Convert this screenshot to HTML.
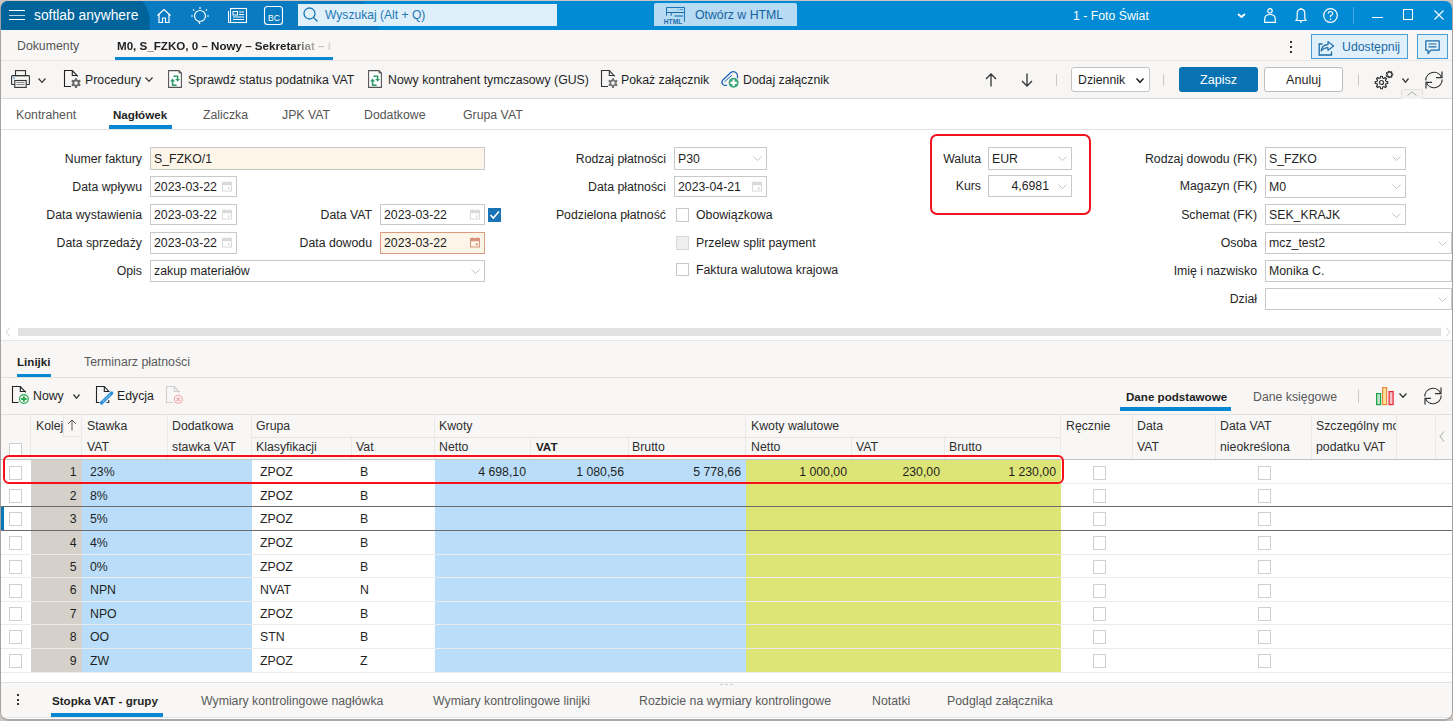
<!DOCTYPE html><html><head><meta charset="utf-8"><style>
*{box-sizing:border-box;margin:0;padding:0}
html,body{width:1453px;height:721px;overflow:hidden;background:#cdc5c1;font-family:"Liberation Sans",sans-serif;font-size:12.2px;color:#1f1f1f}
.a{position:absolute;white-space:nowrap;line-height:1}
#win{position:absolute;left:0;top:1px;width:1453px;height:720px;background:#f8f7f6;border-radius:8px 8px 9px 9px;overflow:hidden;border:1px solid #a2a2a2;border-top:none;border-bottom:2px solid #a8a8a8}
svg{position:absolute;overflow:visible}
.b{font-weight:bold;font-size:11.6px}
.g{color:#5c5c5c}
.inp{position:absolute;border:1px solid #c8c8c8;background:#fff}
.cb{position:absolute;width:13px;height:13px;border:1px solid #c6c6c6;background:#fff}
</style></head><body><div id="win"><div class="a" style="left:-1px;top:0px;width:1453px;height:29px;background:#008bd4"></div><div class="a" style="left:0;top:0;width:400px;height:29px;background:#0a7bc0;clip-path:polygon(0 0,362px 0,379px 29px,0 29px)"></div><svg style="left:0;top:0" width="160" height="29" viewBox="0 0 160 29"><path d="M0 0 H141 Q150.5 9 148.5 29 H0 Z" fill="#00649b"/></svg><div class="a" style="left:8px;top:9px;width:16px;height:1.3px;background:#fff"></div><div class="a" style="left:8px;top:13.6px;width:16px;height:1.3px;background:#c4d9e6"></div><div class="a" style="left:8px;top:18px;width:16px;height:1.3px;background:#fff"></div><div class="a " style="left:33px;top:8px;color:#fff;font-size:13.8px">softlab anywhere</div><svg style="left:155px;top:7px;" width="16" height="16" viewBox="0 0 16 16"><path d="M1.5 7.5 L8 1.5 L14.5 7.5 M3 6.5 V14.5 H6.5 V10 H9.5 V14.5 H13 V6.5" fill="none" stroke="#fff" stroke-width="1.2"/></svg><svg style="left:189px;top:5px;" width="20" height="20" viewBox="0 0 20 20"><circle cx="10" cy="10" r="5.5" fill="none" stroke="#fff" stroke-width="1.2"/><path d="M8.5 15.5 L10 18 M10 1v2 M3 3.5l1.2 1.2 M17 3.5l-1.2 1.2 M1 10h2 M17 10h2" stroke="#fff" stroke-width="1.2"/></svg><svg style="left:227px;top:7px;" width="19" height="15" viewBox="0 0 19 15"><rect x="2.5" y="0.5" width="16" height="14" fill="none" stroke="#fff" stroke-width="1.1"/><path d="M0.5 3 V14.5 H2.5" fill="none" stroke="#fff" stroke-width="1"/><rect x="5" y="3.5" width="4.5" height="3.5" fill="none" stroke="#fff" stroke-width="1"/><path d="M11 4h5 M11 6.5h5 M5 9h11 M5 11.5h11" stroke="#fff" stroke-width="1"/></svg><svg style="left:263px;top:5px;" width="19" height="19" viewBox="0 0 19 19"><rect x="0.5" y="0.5" width="18" height="18" rx="3" fill="none" stroke="#fff" stroke-width="1.1"/><text x="4" y="15" font-family="Liberation Sans" font-size="8.5" fill="#fff">BC</text></svg><div class="a" style="left:297px;top:3px;width:259px;height:22px;background:#e0f0fa"></div><svg style="left:302px;top:6px;" width="16" height="16" viewBox="0 0 16 16"><circle cx="6.5" cy="6.5" r="5.5" fill="none" stroke="#1779b9" stroke-width="1.3"/><path d="M10.5 10.5 L14.5 14.5" stroke="#1779b9" stroke-width="1.3"/></svg><div class="a " style="left:324px;top:8px;color:#1e78b6;font-size:12.1px">Wyszukaj (Alt + Q)</div><div class="a" style="left:653px;top:2px;width:143px;height:23px;background:#b6dbf3;border-radius:2px 2px 0 0"></div><svg style="left:661px;top:5px;" width="24" height="20" viewBox="0 0 24 20"><path d="M4.5 9.7 V1.5 H22.5 V15.8" fill="none" stroke="#1a73b4" stroke-width="1"/><path d="M4.5 6.5 H22.5 M9.2 6.5 V9.7" fill="none" stroke="#1a6aab" stroke-width="1"/><path d="M12.5 10 H21" stroke="#3d8cc6" stroke-width="1.3"/><path d="M15.3 3.6 H16.3 M17.6 3.6 H20.8" stroke="#3d8cc6" stroke-width="0.9"/><text x="1.8" y="18.3" font-family="Liberation Sans" font-weight="bold" font-size="6.6" fill="#1a6aab" textLength="18.5">HTML</text></svg><div class="a " style="left:694px;top:8px;color:#16629e;font-size:12.3px">Otwórz w HTML</div><div class="a " style="left:1072px;top:9px;color:#fff;font-size:12.3px">1 - Foto Świat</div><svg style="left:1236px;top:12px;" width="9" height="5" viewBox="0 0 9 5"><path d="M1 1 L4.5 4 L8 1" fill="none" stroke="#fff" stroke-width="1.8"/></svg><svg style="left:1263px;top:7px;" width="12" height="15" viewBox="0 0 12 15"><circle cx="6" cy="2.8" r="2.2" fill="none" stroke="#fff" stroke-width="1.2"/><path d="M0.7 14.4 V11 Q0.7 6.5 6 6.5 Q11.3 6.5 11.3 11 V14.4 Z" fill="none" stroke="#fff" stroke-width="1.2"/></svg><svg style="left:1294px;top:7px;" width="12" height="16" viewBox="0 0 12 16"><path d="M1 12.5 H11 L9.8 10.5 V5.5 Q9.8 1.2 6 1.2 Q2.2 1.2 2.2 5.5 V10.5 Z" fill="none" stroke="#fff" stroke-width="1.2"/><path d="M6 0 V1.2 M6 13 V15" stroke="#fff" stroke-width="1.3"/></svg><svg style="left:1322px;top:7px;" width="16" height="16" viewBox="0 0 16 16"><circle cx="7.5" cy="7.5" r="6.8" fill="none" stroke="#fff" stroke-width="1.2"/><path d="M5.3 5.6 Q5.3 3.5 7.5 3.5 Q9.7 3.5 9.7 5.5 Q9.7 6.8 7.5 7.8 V9.2" fill="none" stroke="#fff" stroke-width="1.2"/><circle cx="7.5" cy="11.2" r="0.8" fill="#fff"/></svg><div class="a" style="left:1352px;top:6px;width:1px;height:17px;background:#47a6e0"></div><div class="a" style="left:1371px;top:16px;width:11px;height:1.2px;background:#fff"></div><div class="a" style="left:1401.5px;top:8px;width:10.5px;height:10.5px;border:1.2px solid #fff"></div><svg style="left:1433px;top:9px;" width="10" height="10" viewBox="0 0 10 10"><path d="M0.5 0.5 L9.5 9.5 M9.5 0.5 L0.5 9.5" stroke="#fff" stroke-width="1.1"/></svg><div class="a" style="left:-1px;top:29px;width:1453px;height:30px;background:#f8f7f6"></div><div class="a" style="left:-1px;top:59px;width:1453px;height:1px;background:#e9e7e5"></div><div class="a g" style="left:16px;top:39px;font-size:12.3px;color:#555">Dokumenty</div><div class="a b" style="left:116px;top:39px;width:218px;overflow:hidden;font-size:11.6px;-webkit-mask-image:linear-gradient(90deg,#000 81%,rgba(0,0,0,0.55) 86%,rgba(0,0,0,0.3) 91%,rgba(0,0,0,0.1) 100%)">M0, S_FZKO, 0 – Nowy – Sekretariat – i</div><div class="a" style="left:114px;top:56px;width:218px;height:3px;background:#0a87d2"></div><div class="a" style="left:1288.5px;top:40px;width:2px;height:2px;background:#333"></div><div class="a" style="left:1288.5px;top:45px;width:2px;height:2px;background:#333"></div><div class="a" style="left:1288.5px;top:50px;width:2px;height:2px;background:#333"></div><div class="a" style="left:1310px;top:33px;width:97px;height:25px;background:#dff0fa;border:1px solid #4a9bd6"></div><svg style="left:1317px;top:39px;" width="17" height="16" viewBox="0 0 17 16"><path d="M4.5 4 H1.2 V15 H13.5 V11.5" fill="none" stroke="#1a6aa8" stroke-width="1.3"/><path d="M3.2 11 Q3.8 4.8 10 4.6 V1.6 L15.6 6 L10 10.4 V7.6 Q5.8 7.6 3.2 11 Z" fill="none" stroke="#1a6aa8" stroke-width="1.2" stroke-linejoin="round"/></svg><div class="a " style="left:1341px;top:40px;color:#1a68a6;font-size:12.3px">Udostępnij</div><div class="a" style="left:1416px;top:33px;width:31px;height:25px;background:#dff0fa;border:1px solid #4a9bd6"></div><svg style="left:1424px;top:39px;" width="16" height="15" viewBox="0 0 16 15"><path d="M0.8 0.8 H14.2 V10.2 H6 L3 13.5 V10.2 H0.8 Z" fill="none" stroke="#1a6aa8" stroke-width="1.2" stroke-linejoin="round"/><path d="M3.5 4 H11.5 M3.5 6.8 H11.5" stroke="#1a6aa8" stroke-width="1.2"/></svg><div class="a" style="left:-1px;top:60px;width:1453px;height:37px;background:#f7f6f5"></div><div class="a" style="left:-1px;top:97px;width:1453px;height:1px;background:#dedcda"></div><svg style="left:10px;top:69px;" width="19" height="18" viewBox="0 0 19 18"><rect x="4.5" y="0.6" width="10" height="5" fill="none" stroke="#333" stroke-width="1.1"/><path d="M3.5 14.5 H1 Q0.6 14.5 0.6 14 V6.5 Q0.6 5.6 1.5 5.6 H17.5 Q18.4 5.6 18.4 6.5 V14 Q18.4 14.5 18 14.5 H15.5" fill="none" stroke="#333" stroke-width="1.1"/><rect x="3.8" y="10.5" width="11.4" height="6.9" fill="none" stroke="#333" stroke-width="1.1"/><path d="M5.5 12.5 H13.5 M5.5 14.5 H13.5" stroke="#888" stroke-width="1"/><path d="M2 8 H4" stroke="#1a8ad4" stroke-width="1"/></svg><svg style="left:37px;top:77px;" width="8" height="5" viewBox="0 0 8 5"><path d="M0.5 0.5 L4.0 4.3 L7.5 0.5" fill="none" stroke="#333" stroke-width="1.2"/></svg><svg style="left:63px;top:69px;" width="18" height="18" viewBox="0 0 18 18"><path d="M7 16.5 H0.5 V0.5 H8.3 L13.8 6.3" fill="none" stroke="#222" stroke-width="1.1"/><path d="M8.3 0.5 V5.5 H13.5" fill="none" stroke="#222" stroke-width="1.1"/><path d="M11.11 8.18 L12.89 8.18 L13.14 9.58 L14.48 10.35 L15.82 9.87 L16.70 11.41 L15.62 12.33 L15.62 13.87 L16.70 14.79 L15.82 16.33 L14.48 15.85 L13.14 16.62 L12.89 18.02 L11.11 18.02 L10.86 16.62 L9.52 15.85 L8.18 16.33 L7.30 14.79 L8.38 13.87 L8.38 12.33 L7.30 11.41 L8.18 9.87 L9.52 10.35 L10.86 9.58 Z" fill="#666"/><circle cx="12" cy="13.1" r="1.8" fill="#f7f6f5"/></svg><div class="a " style="left:84px;top:73px;font-size:12.3px">Procedury</div><svg style="left:144px;top:76px;" width="8" height="5" viewBox="0 0 8 5"><path d="M0.5 0.5 L4.0 4.3 L7.5 0.5" fill="none" stroke="#333" stroke-width="1.2"/></svg><svg style="left:167px;top:69px;" width="15" height="18" viewBox="0 0 15 18"><path d="M0.6 0.6 H11 L13.4 3 V17.4 H0.6 Z" fill="#fff" stroke="#555" stroke-width="1.1"/><path d="M11 0.6 V3 H13.4" fill="none" stroke="#555" stroke-width="1"/><path d="M5.5 6.3 H9.6 V9.5" fill="none" stroke="#2b9a66" stroke-width="1.5"/><path d="M7.1 9 L9.6 11.6 L12.1 9 Z" fill="#2b9a66"/><path d="M4.6 11 V15.3 H8.6" fill="none" stroke="#2b9a66" stroke-width="1.5"/><path d="M2 11.4 L4.6 8.6 L7.2 11.4 Z" fill="#2b9a66"/></svg><div class="a " style="left:187px;top:73px;font-size:12.3px">Sprawdź status podatnika VAT</div><svg style="left:367px;top:69px;" width="15" height="18" viewBox="0 0 15 18"><path d="M0.6 0.6 H11 L13.4 3 V17.4 H0.6 Z" fill="#fff" stroke="#555" stroke-width="1.1"/><path d="M11 0.6 V3 H13.4" fill="none" stroke="#555" stroke-width="1"/><path d="M5.5 6.3 H9.6 V9.5" fill="none" stroke="#2b9a66" stroke-width="1.5"/><path d="M7.1 9 L9.6 11.6 L12.1 9 Z" fill="#2b9a66"/><path d="M4.6 11 V15.3 H8.6" fill="none" stroke="#2b9a66" stroke-width="1.5"/><path d="M2 11.4 L4.6 8.6 L7.2 11.4 Z" fill="#2b9a66"/></svg><div class="a " style="left:387px;top:73px;font-size:12.3px">Nowy kontrahent tymczasowy (GUS)</div><svg style="left:600px;top:69px;" width="18" height="18" viewBox="0 0 18 18"><path d="M7 16.5 H0.5 V0.5 H8.3 L13.8 6.3" fill="none" stroke="#333" stroke-width="1.1"/><path d="M8.3 0.5 V5.5 H13.5" fill="none" stroke="#333" stroke-width="1.1"/><path d="M11.11 8.18 L12.89 8.18 L13.14 9.58 L14.48 10.35 L15.82 9.87 L16.70 11.41 L15.62 12.33 L15.62 13.87 L16.70 14.79 L15.82 16.33 L14.48 15.85 L13.14 16.62 L12.89 18.02 L11.11 18.02 L10.86 16.62 L9.52 15.85 L8.18 16.33 L7.30 14.79 L8.38 13.87 L8.38 12.33 L7.30 11.41 L8.18 9.87 L9.52 10.35 L10.86 9.58 Z" fill="#777"/><circle cx="12" cy="13.1" r="1.8" fill="#f7f6f5"/></svg><div class="a " style="left:620px;top:73px;font-size:12.3px">Pokaż załącznik</div><svg style="left:719px;top:69px;" width="20" height="19" viewBox="0 0 20 19"><path d="M17.5 8.5 V5.5 A4.2 4.2 0 0 0 10.8 2.5 L2.5 10.2 A3.4 3.4 0 0 0 7 15" fill="none" stroke="#1a5fb4" stroke-width="1.2" stroke-linejoin="round"/><path d="M12 5 L4.5 11.8" stroke="#1a5fb4" stroke-width="1"/><circle cx="13.6" cy="12.8" r="5.8" fill="#f7f6f5"/><circle cx="13.6" cy="12.8" r="5" fill="#3aa57a"/><path d="M13.6 9.6 V16 M10.4 12.8 H16.8" stroke="#fff" stroke-width="2.2"/></svg><div class="a " style="left:742px;top:73px;font-size:12.3px">Dodaj załącznik</div><svg style="left:984px;top:72px;" width="12" height="14" viewBox="0 0 12 14"><path d="M6 13.5 V1 M1 6 L6 1 L11 6" fill="none" stroke="#333" stroke-width="1.3"/></svg><svg style="left:1020px;top:72px;" width="12" height="14" viewBox="0 0 12 14"><path d="M6 0.5 V13 M1 8 L6 13 L11 8" fill="none" stroke="#333" stroke-width="1.3"/></svg><div class="a" style="left:1055px;top:73px;width:1px;height:12px;background:#c9c9c9"></div><div class="a" style="left:1070px;top:66px;width:79px;height:25px;background:#fff;border:1px solid #c3c3c3;border-radius:3px"></div><div class="a " style="left:1077px;top:73px;font-size:12.3px">Dziennik</div><svg style="left:1135px;top:77px;" width="8" height="5" viewBox="0 0 8 5"><path d="M0.5 0.5 L4.0 4.3 L7.5 0.5" fill="none" stroke="#222" stroke-width="1.5"/></svg><div class="a" style="left:1162px;top:73px;width:1px;height:12px;background:#c9c9c9"></div><div class="a" style="left:1178px;top:66px;width:79px;height:25px;background:#0872b2;border-radius:3px"></div><div class="a " style="left:1178px;top:73px;width:79px;text-align:center;color:#fff;font-size:12.6px">Zapisz</div><div class="a" style="left:1263px;top:66px;width:79px;height:25px;background:#fff;border:1px solid #bdbdbd;border-radius:3px"></div><div class="a " style="left:1263px;top:73px;width:79px;text-align:center;font-size:12.6px">Anuluj</div><div class="a" style="left:1357px;top:73px;width:1px;height:12px;background:#c9c9c9"></div><svg style="left:1373px;top:70px;" width="20" height="19" viewBox="0 0 20 19"><path d="M13.74 10.61 L13.74 12.39 L11.96 12.64 L11.46 13.84 L12.54 15.28 L11.28 16.54 L9.84 15.46 L8.64 15.96 L8.39 17.74 L6.61 17.74 L6.36 15.96 L5.16 15.46 L3.72 16.54 L2.46 15.28 L3.54 13.84 L3.04 12.64 L1.26 12.39 L1.26 10.61 L3.04 10.36 L3.54 9.16 L2.46 7.72 L3.72 6.46 L5.16 7.54 L6.36 7.04 L6.61 5.26 L8.39 5.26 L8.64 7.04 L9.84 7.54 L11.28 6.46 L12.54 7.72 L11.46 9.16 L11.96 10.36 Z" fill="#f7f6f5" stroke="#333" stroke-width="1.2" stroke-linejoin="round"/><circle cx="7.5" cy="11.5" r="2" fill="none" stroke="#333" stroke-width="1.2"/><path d="M18.76 2.97 L18.76 4.03 L17.61 4.12 L17.30 4.76 L17.95 5.72 L17.12 6.38 L16.33 5.54 L15.64 5.70 L15.29 6.79 L14.26 6.56 L14.42 5.42 L13.87 4.98 L12.80 5.39 L12.34 4.43 L13.33 3.85 L13.33 3.15 L12.34 2.57 L12.80 1.61 L13.87 2.02 L14.42 1.58 L14.26 0.44 L15.29 0.21 L15.64 1.30 L16.33 1.46 L17.12 0.62 L17.95 1.28 L17.30 2.24 L17.61 2.88 Z" fill="#f7f6f5" stroke="#333" stroke-width="1.1" stroke-linejoin="round"/></svg><svg style="left:1401px;top:77px;" width="7" height="5" viewBox="0 0 7 5"><path d="M0.5 0.5 L3.5 4.3 L6.5 0.5" fill="none" stroke="#333" stroke-width="1.3"/></svg><svg style="left:1424px;top:70px;" width="19" height="19" viewBox="0 0 19 19"><path d="M0.8 9.5 A8.2 8.2 0 0 1 16.5 6.2" fill="none" stroke="#333" stroke-width="1.2"/><path d="M17 0.5 V6.7 H11" fill="none" stroke="#333" stroke-width="1.2"/><path d="M17.2 8.5 A8.2 8.2 0 0 1 1.5 11.8" fill="none" stroke="#333" stroke-width="1.2"/><path d="M1 17.5 V11.3 H7" fill="none" stroke="#333" stroke-width="1.2"/></svg><div class="a" style="left:1400px;top:88px;width:22px;height:10px;background:#f3f2f1;border:1px solid #e1dfdd;border-bottom:none;border-radius:2px 2px 0 0"></div><svg style="left:1406px;top:90px;" width="10" height="5" viewBox="0 0 10 5"><path d="M0.5 4.5 L5 0.8 L9.5 4.5" fill="none" stroke="#aaa" stroke-width="1"/></svg><div class="a" style="left:-1px;top:98px;width:1453px;height:30px;background:#fff"></div><div class="a" style="left:-1px;top:128px;width:1453px;height:1px;background:#e3e1df"></div><div class="a " style="left:15px;top:108px;color:#555;font-size:12.3px">Kontrahent</div><div class="a " style="left:202px;top:108px;color:#555;font-size:12.3px">Zaliczka</div><div class="a " style="left:281px;top:108px;color:#555;font-size:12.3px">JPK VAT</div><div class="a " style="left:363px;top:108px;color:#555;font-size:12.3px">Dodatkowe</div><div class="a " style="left:462px;top:108px;color:#555;font-size:12.3px">Grupa VAT</div><div class="a b" style="left:112px;top:108px;font-size:11.6px">Nagłówek</div><div class="a" style="left:108px;top:124px;width:63px;height:4px;background:#0a87d2"></div><div class="a" style="left:-1px;top:129px;width:1453px;height:210px;background:#fff"></div><div class="a" style="right:1310px;top:152px;color:#262626;font-size:12.3px;">Numer faktury</div><div class="a" style="left:149px;top:146px;width:335px;height:23px;background:#fdf5e8;border:1px solid #c8c8c8"></div><div class="a " style="left:153px;top:152px;font-size:12.3px">S_FZKO/1</div><div class="a" style="right:1310px;top:180px;color:#262626;font-size:12.3px;">Data wpływu</div><div class="a" style="left:149px;top:175px;width:87px;height:21px;background:#fff;border:1px solid #c8c8c8"></div><div class="a " style="left:153px;top:180px;font-size:12.3px">2023-03-22</div><svg style="left:221px;top:180px;" width="10" height="11" viewBox="0 0 10 11"><rect x="0.5" y="1.5" width="9" height="8.5" fill="none" stroke="#dadada" stroke-width="1"/><path d="M0.5 3 H9.5" stroke="#dadada" stroke-width="2.6"/><path d="M2.3 0.3 V2 M7.7 0.3 V2" stroke="#dadada" stroke-width="1.1"/><rect x="5.8" y="6.3" width="2" height="2" fill="#dadada"/></svg><div class="a" style="right:1310px;top:208px;color:#262626;font-size:12.3px;">Data wystawienia</div><div class="a" style="left:149px;top:203px;width:87px;height:21px;background:#fff;border:1px solid #c8c8c8"></div><div class="a " style="left:153px;top:208px;font-size:12.3px">2023-03-22</div><svg style="left:221px;top:208px;" width="10" height="11" viewBox="0 0 10 11"><rect x="0.5" y="1.5" width="9" height="8.5" fill="none" stroke="#dadada" stroke-width="1"/><path d="M0.5 3 H9.5" stroke="#dadada" stroke-width="2.6"/><path d="M2.3 0.3 V2 M7.7 0.3 V2" stroke="#dadada" stroke-width="1.1"/><rect x="5.8" y="6.3" width="2" height="2" fill="#dadada"/></svg><div class="a" style="right:1080px;top:208px;color:#262626;font-size:12.3px;">Data VAT</div><div class="a" style="left:379px;top:203px;width:105px;height:21px;background:#fff;border:1px solid #c8c8c8"></div><div class="a " style="left:383px;top:208px;font-size:12.3px">2023-03-22</div><svg style="left:469px;top:208px;" width="10" height="11" viewBox="0 0 10 11"><rect x="0.5" y="1.5" width="9" height="8.5" fill="none" stroke="#dadada" stroke-width="1"/><path d="M0.5 3 H9.5" stroke="#dadada" stroke-width="2.6"/><path d="M2.3 0.3 V2 M7.7 0.3 V2" stroke="#dadada" stroke-width="1.1"/><rect x="5.8" y="6.3" width="2" height="2" fill="#dadada"/></svg><div class="a" style="left:487px;top:207px;width:13px;height:14px;background:#1a73b5"></div><svg style="left:487px;top:207px;" width="13" height="14" viewBox="0 0 13 14"><path d="M2.5 7 L5.3 10 L11 3.5" fill="none" stroke="#fff" stroke-width="1.6"/></svg><div class="a" style="right:1310px;top:236px;color:#262626;font-size:12.3px;">Data sprzedaży</div><div class="a" style="left:149px;top:231px;width:87px;height:22px;background:#fff;border:1px solid #c8c8c8"></div><div class="a " style="left:153px;top:236px;font-size:12.3px">2023-03-22</div><svg style="left:221px;top:236px;" width="10" height="11" viewBox="0 0 10 11"><rect x="0.5" y="1.5" width="9" height="8.5" fill="none" stroke="#dadada" stroke-width="1"/><path d="M0.5 3 H9.5" stroke="#dadada" stroke-width="2.6"/><path d="M2.3 0.3 V2 M7.7 0.3 V2" stroke="#dadada" stroke-width="1.1"/><rect x="5.8" y="6.3" width="2" height="2" fill="#dadada"/></svg><div class="a" style="right:1080px;top:236px;color:#262626;font-size:12.3px;">Data dowodu</div><div class="a" style="left:379px;top:231px;width:105px;height:22px;background:#fdf5e8;border:1px solid #dc9a80"></div><div class="a " style="left:383px;top:236px;font-size:12.3px">2023-03-22</div><svg style="left:469px;top:236px;" width="10" height="11" viewBox="0 0 10 11"><rect x="0.5" y="1.5" width="9" height="8.5" fill="none" stroke="#d8957c" stroke-width="1"/><path d="M0.5 3 H9.5" stroke="#d8957c" stroke-width="2.6"/><path d="M2.3 0.3 V2 M7.7 0.3 V2" stroke="#d8957c" stroke-width="1.1"/><rect x="5.8" y="6.3" width="2" height="2" fill="#d8957c"/></svg><div class="a" style="right:1310px;top:264px;color:#262626;font-size:12.3px;">Opis</div><div class="a" style="left:149px;top:259px;width:335px;height:22px;background:#fff;border:1px solid #c8c8c8"></div><div class="a " style="left:153px;top:264px;font-size:12.3px">zakup materiałów</div><svg style="left:470px;top:268px;" width="9" height="5" viewBox="0 0 9 5"><path d="M0.5 0.5 L4.5 4.5 L8.5 0.5" fill="none" stroke="#c4c4c4" stroke-width="1"/></svg><div class="a" style="right:786px;top:152px;color:#262626;font-size:12.3px;">Rodzaj płatności</div><div class="a" style="left:673px;top:146px;width:93px;height:23px;background:#fff;border:1px solid #c8c8c8"></div><div class="a " style="left:677px;top:152px;font-size:12.3px">P30</div><svg style="left:752px;top:155px;" width="9" height="5" viewBox="0 0 9 5"><path d="M0.5 0.5 L4.5 4.5 L8.5 0.5" fill="none" stroke="#c4c4c4" stroke-width="1"/></svg><div class="a" style="right:786px;top:180px;color:#262626;font-size:12.3px;">Data płatności</div><div class="a" style="left:673px;top:175px;width:93px;height:21px;background:#fff;border:1px solid #c8c8c8"></div><div class="a " style="left:677px;top:180px;font-size:12.3px">2023-04-21</div><svg style="left:751px;top:180px;" width="10" height="11" viewBox="0 0 10 11"><rect x="0.5" y="1.5" width="9" height="8.5" fill="none" stroke="#dadada" stroke-width="1"/><path d="M0.5 3 H9.5" stroke="#dadada" stroke-width="2.6"/><path d="M2.3 0.3 V2 M7.7 0.3 V2" stroke="#dadada" stroke-width="1.1"/><rect x="5.8" y="6.3" width="2" height="2" fill="#dadada"/></svg><div class="a" style="right:786px;top:208px;color:#262626;font-size:12.3px;">Podzielona płatność</div><div class="a" style="left:675px;top:207px;width:13px;height:14px;background:#fff;border:1px solid #c8c8c8"></div><div class="a " style="left:695px;top:208px;font-size:12.3px">Obowiązkowa</div><div class="a" style="left:675px;top:235px;width:13px;height:14px;background:#efefef;border:1px solid #d8d8d8"></div><div class="a " style="left:695px;top:236px;font-size:12.3px">Przelew split payment</div><div class="a" style="left:675px;top:262px;width:13px;height:13px;background:#fff;border:1px solid #c8c8c8"></div><div class="a " style="left:695px;top:263px;font-size:12.3px">Faktura walutowa krajowa</div><div class="a" style="right:471px;top:152px;color:#262626;font-size:12.3px;">Waluta</div><div class="a" style="left:987px;top:146px;width:84px;height:23px;background:#fff;border:1px solid #c8c8c8"></div><div class="a " style="left:991px;top:152px;font-size:12.3px">EUR</div><svg style="left:1057px;top:155px;" width="9" height="5" viewBox="0 0 9 5"><path d="M0.5 0.5 L4.5 4.5 L8.5 0.5" fill="none" stroke="#c4c4c4" stroke-width="1"/></svg><div class="a" style="right:471px;top:179px;color:#262626;font-size:12.3px;">Kurs</div><div class="a" style="left:987px;top:174px;width:84px;height:22px;background:#fff;border:1px solid #c8c8c8"></div><div class="a" style="right:403px;top:179px;font-size:12.3px">4,6981</div><svg style="left:1057px;top:183px;" width="9" height="5" viewBox="0 0 9 5"><path d="M0.5 0.5 L4.5 4.5 L8.5 0.5" fill="none" stroke="#c4c4c4" stroke-width="1"/></svg><div class="a" style="left:929px;top:133px;width:161px;height:81px;border:2px solid #f0141e;border-radius:7px"></div><div class="a" style="right:195px;top:152px;color:#262626;font-size:12.3px;">Rodzaj dowodu (FK)</div><div class="a" style="left:1264px;top:146px;width:141px;height:23px;background:#fff;border:1px solid #c8c8c8"></div><div class="a " style="left:1268px;top:152px;font-size:12.3px">S_FZKO</div><svg style="left:1391px;top:155px;" width="9" height="5" viewBox="0 0 9 5"><path d="M0.5 0.5 L4.5 4.5 L8.5 0.5" fill="none" stroke="#c4c4c4" stroke-width="1"/></svg><div class="a" style="right:195px;top:179px;color:#262626;font-size:12.3px;">Magazyn (FK)</div><div class="a" style="left:1264px;top:174px;width:141px;height:23px;background:#fff;border:1px solid #c8c8c8"></div><div class="a " style="left:1268px;top:180px;font-size:12.3px">M0</div><svg style="left:1391px;top:183px;" width="9" height="5" viewBox="0 0 9 5"><path d="M0.5 0.5 L4.5 4.5 L8.5 0.5" fill="none" stroke="#c4c4c4" stroke-width="1"/></svg><div class="a" style="right:195px;top:208px;color:#262626;font-size:12.3px;">Schemat (FK)</div><div class="a" style="left:1264px;top:203px;width:141px;height:21px;background:#fff;border:1px solid #c8c8c8"></div><div class="a " style="left:1268px;top:208px;font-size:12.3px">SEK_KRAJK</div><svg style="left:1391px;top:212px;" width="9" height="5" viewBox="0 0 9 5"><path d="M0.5 0.5 L4.5 4.5 L8.5 0.5" fill="none" stroke="#c4c4c4" stroke-width="1"/></svg><div class="a" style="right:195px;top:236px;color:#262626;font-size:12.3px;">Osoba</div><div class="a" style="left:1264px;top:231px;width:187px;height:22px;background:#fff;border:1px solid #c8c8c8"></div><div class="a " style="left:1268px;top:236px;font-size:12.3px">mcz_test2</div><svg style="left:1437px;top:240px;" width="9" height="5" viewBox="0 0 9 5"><path d="M0.5 0.5 L4.5 4.5 L8.5 0.5" fill="none" stroke="#c4c4c4" stroke-width="1"/></svg><div class="a" style="right:195px;top:264px;color:#262626;font-size:12.3px;">Imię i nazwisko</div><div class="a" style="left:1264px;top:259px;width:187px;height:22px;background:#fff;border:1px solid #c8c8c8"></div><div class="a " style="left:1268px;top:264px;font-size:12.3px">Monika C.</div><div class="a" style="right:195px;top:292px;color:#262626;font-size:12.3px;">Dział</div><div class="a" style="left:1264px;top:287px;width:187px;height:22px;background:#fff;border:1px solid #c8c8c8"></div><svg style="left:1437px;top:296px;" width="9" height="5" viewBox="0 0 9 5"><path d="M0.5 0.5 L4.5 4.5 L8.5 0.5" fill="none" stroke="#c4c4c4" stroke-width="1"/></svg><div class="a" style="left:17px;top:327px;width:1423px;height:8px;background:#e1e1e1"></div><svg style="left:4px;top:326px;" width="6" height="10" viewBox="0 0 6 10"><path d="M5 0.5 L1 5 L5 9.5" fill="none" stroke="#d0d0d0" stroke-width="1"/></svg><svg style="left:1444px;top:326px;" width="6" height="10" viewBox="0 0 6 10"><path d="M1 0.5 L5 5 L1 9.5" fill="none" stroke="#d0d0d0" stroke-width="1"/></svg><div class="a" style="left:-1px;top:339px;width:1453px;height:1px;background:#e9e7e5"></div><div class="a" style="left:-1px;top:340px;width:1453px;height:73px;background:#f8f7f6"></div><div class="a b" style="left:16px;top:355px;font-size:11.6px">Linijki</div><div class="a" style="left:16px;top:373px;width:34px;height:4px;background:#0a87d2"></div><div class="a " style="left:83px;top:355px;color:#5a5a5a;font-size:12.3px">Terminarz płatności</div><div class="a" style="left:-1px;top:376px;width:1453px;height:1px;background:#e3e1df"></div><svg style="left:11px;top:385px;" width="18" height="18" viewBox="0 0 18 18"><path d="M6.5 16.5 H0.5 V0.5 H8.3 L13.8 6.3" fill="none" stroke="#222" stroke-width="1.1"/><path d="M8.3 0.5 V5.5 H13.5" fill="none" stroke="#222" stroke-width="1.1"/><circle cx="11.9" cy="13" r="4.4" fill="#f8f7f6" stroke="#22aa4a" stroke-width="1.2"/><path d="M11.9 10.3 V15.7 M9.2 13 H14.6" stroke="#22aa4a" stroke-width="1.8"/></svg><div class="a " style="left:32px;top:389px;font-size:12.3px">Nowy</div><svg style="left:72px;top:393px;" width="7" height="5" viewBox="0 0 7 5"><path d="M0.5 0.5 L3.5 4.3 L6.5 0.5" fill="none" stroke="#333" stroke-width="1.3"/></svg><svg style="left:95px;top:385px;" width="18" height="18" viewBox="0 0 18 18"><path d="M3.5 16.5 H0.5 V0.5 H8.3 L12.8 5.5 H8.3 V0.5" fill="none" stroke="#222" stroke-width="1.1"/><path d="M10.5 16.5 H12.8 V14" fill="none" stroke="#333" stroke-width="1.1"/><path d="M5.5 17 L15.8 7" stroke="#2a8fd8" stroke-width="3.2" stroke-linecap="round"/><path d="M7 15.5 L14.5 8.3" stroke="#dceefa" stroke-width="0.9" stroke-dasharray="1.3 0.8"/></svg><div class="a " style="left:116px;top:389px;font-size:12.3px">Edycja</div><svg style="left:165px;top:385px;" width="18" height="18" viewBox="0 0 18 18"><path d="M7 16.5 H0.5 V0.5 H8.3 L13.8 6.3" fill="none" stroke="#cfcfcf" stroke-width="1.1"/><path d="M8.3 0.5 V5.5 H13.5" fill="none" stroke="#cfcfcf" stroke-width="1.1"/><circle cx="12.3" cy="13.3" r="4" fill="#f8f7f6" stroke="#f5a5a5" stroke-width="1.1"/><path d="M10.6 11.6 L14 15 M14 11.6 L10.6 15" stroke="#f5a5a5" stroke-width="1.1"/></svg><div class="a b" style="left:1125px;top:390px;font-size:11.6px">Dane podstawowe</div><div class="a" style="left:1119px;top:406px;width:111px;height:4px;background:#0a87d2"></div><div class="a " style="left:1252px;top:390px;color:#5a5a5a;font-size:12.3px">Dane księgowe</div><div class="a" style="left:1357px;top:389px;width:1px;height:13px;background:#c9c9c9"></div><svg style="left:1375px;top:385.5px;" width="19" height="18" viewBox="0 0 19 18"><rect x="0.6" y="6.6" width="4" height="11" fill="#bfe3c4" stroke="#1aa34a" stroke-width="1.2"/><rect x="6.6" y="0.6" width="4" height="17" fill="#fbe29a" stroke="#ef8a3c" stroke-width="1.2"/><rect x="13.1" y="4.6" width="4" height="13" fill="#f6c4c8" stroke="#e8222d" stroke-width="1.2"/></svg><svg style="left:1398px;top:392px;" width="8" height="5" viewBox="0 0 8 5"><path d="M0.5 0.5 L4.0 4.3 L7.5 0.5" fill="none" stroke="#333" stroke-width="1.3"/></svg><svg style="left:1423px;top:386px;" width="19" height="19" viewBox="0 0 19 19"><path d="M0.8 9.5 A8.2 8.2 0 0 1 16.5 6.2" fill="none" stroke="#333" stroke-width="1.2"/><path d="M17 0.5 V6.7 H11" fill="none" stroke="#333" stroke-width="1.2"/><path d="M17.2 8.5 A8.2 8.2 0 0 1 1.5 11.8" fill="none" stroke="#333" stroke-width="1.2"/><path d="M1 17.5 V11.3 H7" fill="none" stroke="#333" stroke-width="1.2"/></svg><div class="a" style="left:-1px;top:413px;width:1453px;height:45px;background:#f8f7f6;border-top:1px solid #e3e1df"></div><div class="a" style="left:29px;top:414px;width:1px;height:44px;background:#ebe9e7"></div><div class="a" style="left:80px;top:414px;width:1px;height:44px;background:#ebe9e7"></div><div class="a" style="left:166px;top:414px;width:1px;height:44px;background:#ebe9e7"></div><div class="a" style="left:250px;top:414px;width:1px;height:44px;background:#ebe9e7"></div><div class="a" style="left:433px;top:414px;width:1px;height:44px;background:#ebe9e7"></div><div class="a" style="left:744px;top:414px;width:1px;height:44px;background:#ebe9e7"></div><div class="a" style="left:1059px;top:414px;width:1px;height:44px;background:#ebe9e7"></div><div class="a" style="left:1131px;top:414px;width:1px;height:44px;background:#ebe9e7"></div><div class="a" style="left:1214px;top:414px;width:1px;height:44px;background:#ebe9e7"></div><div class="a" style="left:1310px;top:414px;width:1px;height:44px;background:#ebe9e7"></div><div class="a" style="left:1395px;top:414px;width:1px;height:44px;background:#ebe9e7"></div><div class="a" style="left:1434px;top:414px;width:1px;height:44px;background:#ebe9e7"></div><div class="a" style="left:350px;top:436px;width:1px;height:22px;background:#ebe9e7"></div><div class="a" style="left:529px;top:436px;width:1px;height:22px;background:#ebe9e7"></div><div class="a" style="left:627px;top:436px;width:1px;height:22px;background:#ebe9e7"></div><div class="a" style="left:850px;top:436px;width:1px;height:22px;background:#ebe9e7"></div><div class="a" style="left:943px;top:436px;width:1px;height:22px;background:#ebe9e7"></div><div class="a" style="left:250px;top:436px;width:809px;height:1px;background:#e6e4e2"></div><div class="a" style="left:62px;top:414px;width:18px;height:22px;border-left:1px solid #e6e4e2;border-bottom:1px solid #e6e4e2"></div><svg style="left:66px;top:418px;" width="10" height="12" viewBox="0 0 10 12"><path d="M5 11.5 V1 M1 5 L5 1 L9 5" fill="none" stroke="#444" stroke-width="0.9"/></svg><div class="a " style="left:35px;top:419px;color:#2e2e2e;font-size:12.3px">Kolej</div><div class="a " style="left:86px;top:419px;color:#2e2e2e;font-size:12.3px">Stawka</div><div class="a " style="left:86px;top:440px;color:#2e2e2e;font-size:12.3px">VAT</div><div class="a " style="left:171px;top:419px;color:#2e2e2e;font-size:12.3px">Dodatkowa</div><div class="a " style="left:171px;top:440px;color:#2e2e2e;font-size:12.3px">stawka VAT</div><div class="a " style="left:255px;top:419px;color:#2e2e2e;font-size:12.3px">Grupa</div><div class="a " style="left:255px;top:440px;color:#2e2e2e;font-size:12.3px">Klasyfikacji</div><div class="a " style="left:355px;top:440px;color:#2e2e2e;font-size:12.3px">Vat</div><div class="a " style="left:438px;top:419px;color:#2e2e2e;font-size:12.3px">Kwoty</div><div class="a " style="left:438px;top:440px;color:#2e2e2e;font-size:12.3px">Netto</div><div class="a b" style="left:535px;top:440px;color:#222;font-size:11.6px">VAT</div><div class="a " style="left:631px;top:440px;color:#2e2e2e;font-size:12.3px">Brutto</div><div class="a " style="left:750px;top:419px;color:#2e2e2e;font-size:12.3px">Kwoty walutowe</div><div class="a " style="left:750px;top:440px;color:#2e2e2e;font-size:12.3px">Netto</div><div class="a " style="left:855px;top:440px;color:#2e2e2e;font-size:12.3px">VAT</div><div class="a " style="left:948px;top:440px;color:#2e2e2e;font-size:12.3px">Brutto</div><div class="a " style="left:1065px;top:419px;color:#2e2e2e;font-size:12.3px">Ręcznie</div><div class="a " style="left:1136px;top:419px;color:#2e2e2e;font-size:12.3px">Data</div><div class="a " style="left:1136px;top:440px;color:#2e2e2e;font-size:12.3px">VAT</div><div class="a " style="left:1219px;top:419px;color:#2e2e2e;font-size:12.3px">Data VAT</div><div class="a " style="left:1219px;top:440px;color:#2e2e2e;font-size:12.3px">nieokreślona</div><div class="a" style="left:1315px;top:419px;width:80px;overflow:hidden;color:#2e2e2e;font-size:12.3px">Szczególny moment</div><div class="a " style="left:1315px;top:440px;color:#2e2e2e;font-size:12.3px">podatku VAT</div><svg style="left:1438px;top:430px;" width="6" height="11" viewBox="0 0 6 11"><path d="M5 0.5 L1 5.5 L5 10.5" fill="none" stroke="#b5b5b5" stroke-width="1.1"/></svg><div class="a" style="left:-1px;top:458px;width:1453px;height:1px;background:#c4c4c4"></div><div class="a" style="left:-1px;top:459px;width:1453px;height:222px;background:#fff"></div><div class="a" style="left:30px;top:459px;width:51px;height:212px;background:#d5d0ca"></div><div class="a" style="left:81px;top:459px;width:170px;height:212px;background:#badef9"></div><div class="a" style="left:434px;top:459px;width:311px;height:212px;background:#badef9"></div><div class="a" style="left:745px;top:459px;width:315px;height:212px;background:#dee577"></div><div class="a" style="left:-1px;top:482px;width:1453px;height:1px;background:#ebebeb"></div><div class="a" style="right:1375.5px;top:465px;font-size:12.3px">1</div><div class="a " style="left:89px;top:465px;font-size:12.3px">23%</div><div class="a " style="left:259px;top:465px;font-size:12.3px">ZPOZ</div><div class="a " style="left:359px;top:465px;font-size:12.3px">B</div><div class="a" style="left:8px;top:465px;width:13px;height:14px;background:#fff;border:1px solid #cfcfcf"></div><div class="a" style="left:1092px;top:465px;width:13px;height:14px;background:#fff;border:1px solid #cfcfcf"></div><div class="a" style="left:1257px;top:465px;width:13px;height:14px;background:#fff;border:1px solid #cfcfcf"></div><div class="a" style="left:-1px;top:505px;width:1453px;height:1px;background:#ebebeb"></div><div class="a" style="right:1375.5px;top:489px;font-size:12.3px">2</div><div class="a " style="left:89px;top:489px;font-size:12.3px">8%</div><div class="a " style="left:259px;top:489px;font-size:12.3px">ZPOZ</div><div class="a " style="left:359px;top:489px;font-size:12.3px">B</div><div class="a" style="left:8px;top:488px;width:13px;height:14px;background:#fff;border:1px solid #cfcfcf"></div><div class="a" style="left:1092px;top:488px;width:13px;height:14px;background:#fff;border:1px solid #cfcfcf"></div><div class="a" style="left:1257px;top:488px;width:13px;height:14px;background:#fff;border:1px solid #cfcfcf"></div><div class="a" style="left:-1px;top:529px;width:1453px;height:1px;background:#ebebeb"></div><div class="a" style="right:1375.5px;top:512px;font-size:12.3px">3</div><div class="a " style="left:89px;top:512px;font-size:12.3px">5%</div><div class="a " style="left:259px;top:512px;font-size:12.3px">ZPOZ</div><div class="a " style="left:359px;top:512px;font-size:12.3px">B</div><div class="a" style="left:8px;top:511px;width:13px;height:14px;background:#fff;border:1px solid #cfcfcf"></div><div class="a" style="left:1092px;top:511px;width:13px;height:14px;background:#fff;border:1px solid #cfcfcf"></div><div class="a" style="left:1257px;top:511px;width:13px;height:14px;background:#fff;border:1px solid #cfcfcf"></div><div class="a" style="left:-1px;top:553px;width:1453px;height:1px;background:#ebebeb"></div><div class="a" style="right:1375.5px;top:536px;font-size:12.3px">4</div><div class="a " style="left:89px;top:536px;font-size:12.3px">4%</div><div class="a " style="left:259px;top:536px;font-size:12.3px">ZPOZ</div><div class="a " style="left:359px;top:536px;font-size:12.3px">B</div><div class="a" style="left:8px;top:535px;width:13px;height:14px;background:#fff;border:1px solid #cfcfcf"></div><div class="a" style="left:1092px;top:535px;width:13px;height:14px;background:#fff;border:1px solid #cfcfcf"></div><div class="a" style="left:1257px;top:535px;width:13px;height:14px;background:#fff;border:1px solid #cfcfcf"></div><div class="a" style="left:-1px;top:576px;width:1453px;height:1px;background:#ebebeb"></div><div class="a" style="right:1375.5px;top:560px;font-size:12.3px">5</div><div class="a " style="left:89px;top:560px;font-size:12.3px">0%</div><div class="a " style="left:259px;top:560px;font-size:12.3px">ZPOZ</div><div class="a " style="left:359px;top:560px;font-size:12.3px">B</div><div class="a" style="left:8px;top:559px;width:13px;height:14px;background:#fff;border:1px solid #cfcfcf"></div><div class="a" style="left:1092px;top:559px;width:13px;height:14px;background:#fff;border:1px solid #cfcfcf"></div><div class="a" style="left:1257px;top:559px;width:13px;height:14px;background:#fff;border:1px solid #cfcfcf"></div><div class="a" style="left:-1px;top:600px;width:1453px;height:1px;background:#ebebeb"></div><div class="a" style="right:1375.5px;top:583px;font-size:12.3px">6</div><div class="a " style="left:89px;top:583px;font-size:12.3px">NPN</div><div class="a " style="left:259px;top:583px;font-size:12.3px">NVAT</div><div class="a " style="left:359px;top:583px;font-size:12.3px">N</div><div class="a" style="left:8px;top:583px;width:13px;height:14px;background:#fff;border:1px solid #cfcfcf"></div><div class="a" style="left:1092px;top:583px;width:13px;height:14px;background:#fff;border:1px solid #cfcfcf"></div><div class="a" style="left:1257px;top:583px;width:13px;height:14px;background:#fff;border:1px solid #cfcfcf"></div><div class="a" style="left:-1px;top:623px;width:1453px;height:1px;background:#ebebeb"></div><div class="a" style="right:1375.5px;top:607px;font-size:12.3px">7</div><div class="a " style="left:89px;top:607px;font-size:12.3px">NPO</div><div class="a " style="left:259px;top:607px;font-size:12.3px">ZPOZ</div><div class="a " style="left:359px;top:607px;font-size:12.3px">B</div><div class="a" style="left:8px;top:606px;width:13px;height:14px;background:#fff;border:1px solid #cfcfcf"></div><div class="a" style="left:1092px;top:606px;width:13px;height:14px;background:#fff;border:1px solid #cfcfcf"></div><div class="a" style="left:1257px;top:606px;width:13px;height:14px;background:#fff;border:1px solid #cfcfcf"></div><div class="a" style="left:-1px;top:647px;width:1453px;height:1px;background:#ebebeb"></div><div class="a" style="right:1375.5px;top:630px;font-size:12.3px">8</div><div class="a " style="left:89px;top:630px;font-size:12.3px">OO</div><div class="a " style="left:259px;top:630px;font-size:12.3px">STN</div><div class="a " style="left:359px;top:630px;font-size:12.3px">B</div><div class="a" style="left:8px;top:629px;width:13px;height:14px;background:#fff;border:1px solid #cfcfcf"></div><div class="a" style="left:1092px;top:629px;width:13px;height:14px;background:#fff;border:1px solid #cfcfcf"></div><div class="a" style="left:1257px;top:629px;width:13px;height:14px;background:#fff;border:1px solid #cfcfcf"></div><div class="a" style="left:-1px;top:671px;width:1453px;height:1px;background:#ebebeb"></div><div class="a" style="right:1375.5px;top:654px;font-size:12.3px">9</div><div class="a " style="left:89px;top:654px;font-size:12.3px">ZW</div><div class="a " style="left:259px;top:654px;font-size:12.3px">ZPOZ</div><div class="a " style="left:359px;top:654px;font-size:12.3px">Z</div><div class="a" style="left:8px;top:653px;width:13px;height:14px;background:#fff;border:1px solid #cfcfcf"></div><div class="a" style="left:1092px;top:653px;width:13px;height:14px;background:#fff;border:1px solid #cfcfcf"></div><div class="a" style="left:1257px;top:653px;width:13px;height:14px;background:#fff;border:1px solid #cfcfcf"></div><div class="a" style="left:-1px;top:672px;width:1453px;height:9px;background:#fff"></div><div class="a" style="right:926px;top:465px;font-size:12.3px">4 698,10</div><div class="a" style="right:828px;top:465px;font-size:12.3px">1 080,56</div><div class="a" style="right:711px;top:465px;font-size:12.3px">5 778,66</div><div class="a" style="right:605px;top:465px;font-size:12.3px">1 000,00</div><div class="a" style="right:512px;top:465px;font-size:12.3px">230,00</div><div class="a" style="right:396px;top:465px;font-size:12.3px">1 230,00</div><div class="a" style="left:8px;top:442px;width:13px;height:13px;background:#fff;border:1px solid #cfcfcf"></div><div class="a" style="left:0px;top:505px;width:1451px;height:1px;background:#6b6b6b"></div><div class="a" style="left:0px;top:529px;width:1451px;height:1px;background:#6b6b6b"></div><div class="a" style="left:0px;top:506px;width:3px;height:23px;background:#0a78b8"></div><div class="a" style="left:2px;top:454px;width:1061px;height:29px;border:2px solid #f5101a;border-radius:6px"></div><div class="a" style="left:-1px;top:681px;width:1453px;height:1px;background:#e3e1df"></div><div class="a" style="left:-1px;top:682px;width:1453px;height:35px;background:#f8f7f6"></div><div class="a" style="left:16px;top:693px;width:2px;height:2px;background:#333"></div><div class="a" style="left:16px;top:698px;width:2px;height:2px;background:#333"></div><div class="a" style="left:16px;top:702px;width:2px;height:2px;background:#333"></div><div class="a b" style="left:51px;top:694px;font-size:11.6px">Stopka VAT - grupy</div><div class="a" style="left:50px;top:712px;width:112px;height:4px;background:#0a87d2"></div><div class="a " style="left:200px;top:694px;color:#5a5a5a;font-size:12.3px">Wymiary kontrolingowe nagłówka</div><div class="a " style="left:432px;top:694px;color:#5a5a5a;font-size:12.3px">Wymiary kontrolingowe linijki</div><div class="a " style="left:638px;top:694px;color:#5a5a5a;font-size:12.3px">Rozbicie na wymiary kontrolingowe</div><div class="a " style="left:871px;top:694px;color:#5a5a5a;font-size:12.3px">Notatki</div><div class="a " style="left:946px;top:694px;color:#5a5a5a;font-size:12.3px">Podgląd załącznika</div><div class="a" style="left:719px;top:683px;width:3px;height:1px;background:#d0d0d0"></div><div class="a" style="left:723.5px;top:683px;width:3.5px;height:1px;background:#d0d0d0"></div><div class="a" style="left:728.5px;top:683px;width:3.5px;height:1px;background:#d0d0d0"></div><div class="a" style="left:-1px;top:715.5px;width:1453px;height:1px;background:#e4e4e4"></div><div class="a" style="left:-1px;top:716.5px;width:1453px;height:2px;background:#fff"></div></div></body></html>
